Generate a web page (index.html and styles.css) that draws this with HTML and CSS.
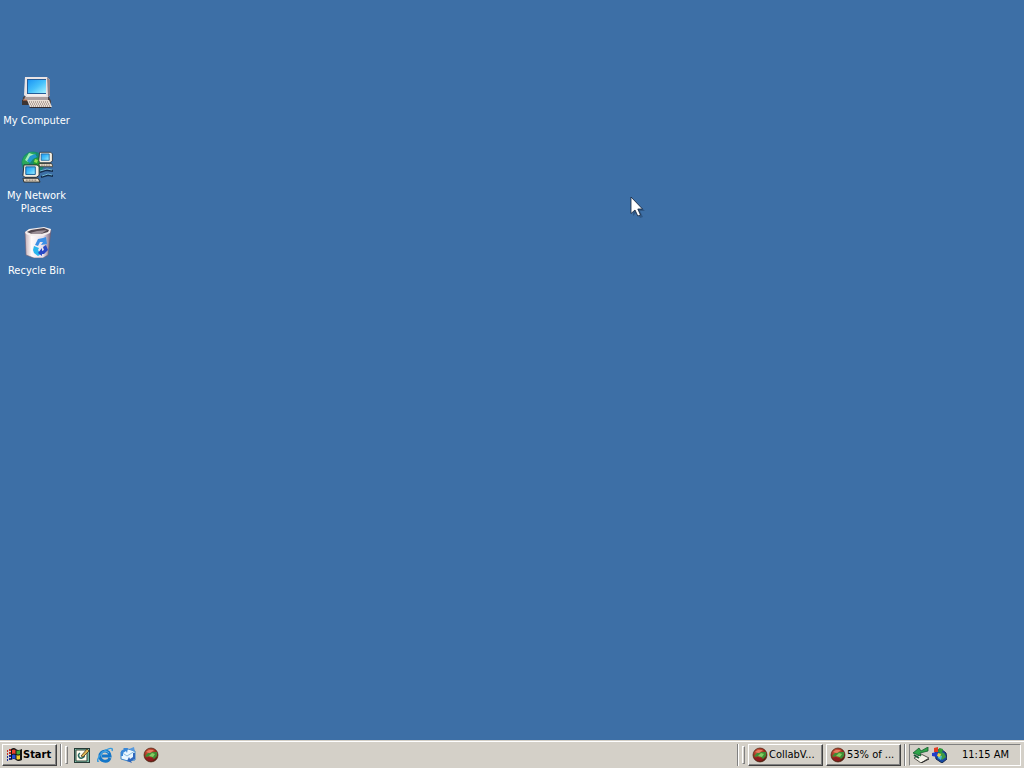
FILE: index.html
```html
<!DOCTYPE html>
<html lang="en">
<head>
<meta charset="utf-8">
<title>Desktop</title>
<link rel="stylesheet" href="styles.css">
</head>
<body>
<svg class="defs" aria-hidden="true">
  <defs>
    <radialGradient id="ball" cx=".4" cy=".3" r=".8"><stop offset="0" stop-color="#dc6a4c"/><stop offset=".5" stop-color="#a32f20"/><stop offset="1" stop-color="#401208"/></radialGradient>
    <linearGradient id="screen" x2="1" y2="1"><stop offset="0" stop-color="#1c96f4"/><stop offset=".5" stop-color="#45c0fb"/><stop offset="1" stop-color="#a5f2ff"/></linearGradient>
    <linearGradient id="bin" x2="1"><stop offset="0" stop-color="#c4b0b8"/><stop offset=".25" stop-color="#fffafa"/><stop offset=".7" stop-color="#e5dfec"/><stop offset="1" stop-color="#75637d"/></linearGradient>
    <symbol id="collab" viewBox="0 0 16 16">
      <circle cx="8" cy="8" r="7" fill="url(#ball)" stroke="#4a2210" stroke-width=".7"/>
      <path d="M2 9 5 6 10 5 14 5 14 9 11 12 9 10 6 9 4 10Z" fill="#3f8d35"/>
      <path d="M3 5 6 3 11 3 7 6Z" fill="#e87c62"/>
      <path d="M6 9 9 6 12 7 10 10Z" fill="#86cc62"/>
      <path d="M3 11 6 10 10 12 11 13 8 14 4 13Z" fill="#8f1c20"/>
    </symbol>
    <symbol id="pc" viewBox="0 0 32 32">
      <path d="M2 21 6 19H27L30 25V29H8L1 29Z" fill="#4a4144"/>
      <path d="M4 21H27V24H3Z" fill="#a99fa0"/>
      <path d="M4 1H26L29 4V19L27 21H5L3 19Z" fill="#e9e3e4"/>
      <path d="M26 1 29 4V19L27 21Z" fill="#8d8088"/>
      <path d="M6 3H25V18H6Z" fill="#245c98"/>
      <path d="M7 4H25V17H7Z" fill="url(#screen)"/>
      <path d="M6 19H25" stroke="#fffaf7"/>
      <path d="M1 24H7V29H1Z" fill="#3d3431"/><path d="M2 24H6" stroke="#dc7d50"/>
      <path d="M8 31H30V32H9Z" fill="#342d30"/>
      <path d="M6 24H28L31 31H9Z" fill="#e9ddd3"/>
      <path d="M8 26H28M9 28H29M10 30H29" stroke="#806f69" stroke-dasharray="1 1"/>
    </symbol>
    <symbol id="minipc" viewBox="0 0 20 20">
      <path d="M2 1H16L18 3V12L15 14H3L1 12Z" fill="#f4efe2" stroke="#252b33"/>
      <path d="M4 3H14V11H4Z" fill="url(#screen)" stroke="#165d97"/>
      <path d="M1 15H17L19 19H2Z" fill="#e5d9c7" stroke="#30312c"/>
      <path d="M4 17H16" stroke="#74695f" stroke-dasharray="2 1"/>
    </symbol>
  </defs>
</svg>
<div class="screen">
  <main class="desktop">
    <a class="shortcut" href="#computer"><svg><use href="#pc"/></svg><span>My Computer</span></a>
    <a class="shortcut" href="#network">
      <svg viewBox="0 0 32 32">
        <circle cx="12" cy="12" r="11.500" fill="#168974"/>
        <path d="M3 6 9 1 15 2 13 7 9 8 8 13 3 16 1 11Z" fill="#2ba85c"/>
        <path d="M8 2 14 4 10 6 7 11 4 9Z" fill="#a2eaba"/>
        <path d="M9 5 14 3 16 6 12 8 9 12 6 10Z" fill="#2398cc"/>
        <path d="M13 8 19 6 22 11 18 17 12 14Z" fill="#229b35"/>
        <path d="M14 8 17 9 16 12 13 11Z" fill="#8cdc55"/>
        <path d="M19 21 25 19 32 20M20 26 27 24 32 25" stroke="#142c4b" stroke-width="2" fill="none"/>
        <path d="M19 20 26 18 31 19M21 25 27 23 31 24" stroke="#70b6d3" fill="none"/>
        <use href="#minipc" x="17" y="0" width="16" height="17"/>
        <use href="#minipc" x="1" y="13" width="19" height="19"/>
      </svg>
      <span>My Network Places</span>
    </a>
    <a class="shortcut" href="#recycle">
      <svg viewBox="0 0 32 32">
        <path d="M4 6 30 4 27 29 22 32 13 32 5 29Z" fill="url(#bin)" stroke="#6f6074" stroke-width=".6"/>
        <path d="M4 6 8 3 23 1 30 3 29 7 22 10 10 10 5 8Z" fill="#f4eeee"/>
        <path d="M6 6 10 4 23 2 28 4 27 6 20 8 11 8Z" fill="#51464f"/>
        <path d="M9 7 16 5 26 4 20 8 11 8Z" fill="#9b8e96"/>
        <path d="M14 19 17 13 22 12 25 11 26 18 20 19 22 16 19 16 17 20Z" fill="#3c8fe6"/>
        <path d="M13 20 18 22 17 24 20 28 17 30 13 27 12 24Z" fill="#29b6ee"/>
        <path d="M25 19 27 24 23 28 21 28 21 30 17 27 21 22 21 25 23 24 22 21Z" fill="#2848c5"/>
      </svg>
      <span>Recycle Bin</span>
    </a>
    <svg class="pointer" viewBox="0 0 16 24" aria-hidden="true">
      <path d="M3 3V20L7 16 10 22 13 21 10 15H15Z" fill="#24486f" opacity=".6"/>
      <path d="M1 1V17.500L5 14 7.800 20 10.500 19 7.800 13H12.500Z" fill="#fff" stroke="#10213a" stroke-width=".8"/>
    </svg>
  </main>
  <footer class="taskbar">
    <button class="button start">
      <svg viewBox="0 0 16 16">
        <path d="M5 2Q8 0 10 2T16 2V13Q12 15 10 13T5 13Z" fill="#151515"/>
        <path d="M6 3Q8 2 9.500 3V7Q8 6 6 7Z" fill="#ee432c"/><path d="M10.500 3.500Q12 4 14 3V7Q12 8 10.500 7Z" fill="#45a73b"/>
        <path d="M6 8Q8 7 9.500 8V12Q8 11 6 12Z" fill="#244dd8"/><path d="M10.500 8Q12 9 14 8V12Q12 13 10.500 12Z" fill="#f2ce32"/>
        <path d="M1 4H2M3 3H5M1 7H2M3 6H5" stroke="#c52c22" stroke-width="2"/><path d="M1 10H2M3 9H5M1 13H2M3 12H5" stroke="#1a2b9a" stroke-width="2"/>
      </svg>Start
    </button>
    <i class="divider"></i><i class="grip"></i>
    <nav class="quick" aria-label="Quick launch">
      <button aria-label="Show Desktop"><svg viewBox="0 0 16 16"><path d="M0 1H16V16H0Z" fill="#263b37"/><path d="M1 2H15V15H1Z" fill="#77b8a5"/><path d="M2 3H13V14H2Z" fill="#fffef0" stroke="#38483e"/><path d="M6 6C3 8 5 12 8 11S11 8 9 8" fill="none" stroke="#2c6c64" stroke-width="1.500"/><path d="M7 9 13 2 15 4 9 10Z" fill="#dcb452" stroke="#4c361a" stroke-width=".8"/></svg></button>
      <button aria-label="Internet Explorer"><svg viewBox="0 0 16 16"><path d="M13 11C11 16 3 15 3 9S12 2 13 9H5" fill="none" stroke="#1376c8" stroke-width="3"/><path d="M4 8C4 4 9 3 12 6" fill="none" stroke="#60b8ee"/><path d="M2 14C-1 16 1 10 5 6S17-1 15 4" fill="none" stroke="#379bdd" stroke-width="1.400"/></svg></button>
      <button aria-label="Outlook Express"><svg viewBox="0 0 16 16"><path d="M1 5 8 2 15 4V13L8 14 1 12Z" fill="#e9f6ff" stroke="#3d85c7"/><path d="M1 5 7 9 15 4" fill="none" stroke="#8abce0"/><path d="M1 9V4L4 2 3 1 8 1 7 6 6 4 3 6V9Z" fill="#3887d7"/><path d="M15 6V12L11 14 12 16 7 14 9 10 10 12 13 10V6Z" fill="#2e67bd"/><path d="M9 2 14 0 15 5Z" fill="#5799dd"/></svg></button>
      <button aria-label="CollabVM"><svg><use href="#collab"/></svg></button>
    </nav>
    <div class="tasks">
      <i class="divider"></i><i class="grip"></i>
      <button class="button task"><svg><use href="#collab"/></svg><span>CollabV...</span></button>
      <button class="button task"><svg><use href="#collab"/></svg><span>53% of ...</span></button>
    </div>
    <i class="divider"></i>
    <div class="tray">
      <svg viewBox="0 0 16 16"><path d="M1 11 8 7 16 11 8 16Z" fill="#f5f3e9" stroke="#53534d"/><path d="M8 16 16 12" stroke="#252525"/><path d="M15 0 8 4 6 1 0 6 8 9 7 6 15 4Z" fill="#30a54a" stroke="#125c2e" stroke-width=".8"/><path d="M1 8 6 11" stroke="#185b39" stroke-width="2"/></svg>
      <svg viewBox="0 0 16 16"><path d="M4 4 10 2 15 6 16 12 11 16 5 12Z" fill="#1749a4" stroke="#13294f"/><path d="M9 5 13 6 15 10 11 13 8 9Z" fill="#3c9944"/><path d="M7 8 11 9 10 13 7 11Z" fill="#48b7d1"/><path d="M3 1 7 0 7 5 3 5Z" fill="#e33b23"/><path d="M8 1 12 2 11 6 7 5Z" fill="#2d9c37"/><path d="M1 6 6 5 6 10 1 9Z" fill="#203dcb"/><path d="M7 6 10 7 9 10 6 9Z" fill="#ecd244"/></svg>
      <time>11:15 AM</time>
    </div>
  </footer>
</div>
</body>
</html>
```
FILE: styles.css
```css
* { box-sizing: border-box; }
body { margin: 0; font: 11px/13px Tahoma, "DejaVu Sans Condensed", "DejaVu Sans", sans-serif; }
.defs { position: absolute; width: 0; height: 0; }
.screen { display: flex; flex-direction: column; min-height: 100vh; background: #3d6fa6; }
.desktop { position: relative; flex: 1; padding-top: 76px; }
.shortcut { display: flex; flex-direction: column; align-items: center; gap: 6px; width: 73px; min-height: 75px; color: #fff; text-align: center; text-decoration: none; }
.shortcut svg { width: 32px; height: 32px; flex: none; }
.pointer { position: absolute; left: 630px; top: 196px; width: 16px; height: 24px; }
.taskbar { display: flex; align-items: center; gap: 3px; height: 28px; padding: 2px 3px 2px 2px; background: #d4d0c8; border-top: 1px solid #d4d0c8; box-shadow: inset 0 1px #fff; }
.button { display: flex; align-items: center; height: 22px; padding: 0 3px; color: #000; font: inherit; background: #d4d0c8; border: 1px solid; border-color: #fff #404040 #404040 #fff; box-shadow: inset -1px -1px #808080; }
.button svg, .quick svg, .tray svg { width: 16px; height: 16px; flex: none; display: block; }
.start { width: 55px; font-weight: bold; padding: 0 3px; gap: 1px; }
.divider { width: 2px; height: 22px; border-left: 1px solid #808080; border-right: 1px solid #fff; }
.grip { width: 3px; height: 18px; border: 1px solid; border-color: #fff #808080 #808080 #fff; }
.quick { display: flex; gap: 7px; margin-left: 3px; }
.quick button { padding: 0; border: 0; background: none; }
.tasks { display: flex; align-items: center; gap: 3px; margin-left: auto; }
.task { width: 75px; gap: 1px; white-space: nowrap; }
.tray { display: flex; align-items: center; gap: 2px; width: 112px; height: 22px; padding: 0 11px 0 3px; border: 1px solid; border-color: #808080 #fff #fff #808080; }
.tray time { margin-left: auto; }
```
